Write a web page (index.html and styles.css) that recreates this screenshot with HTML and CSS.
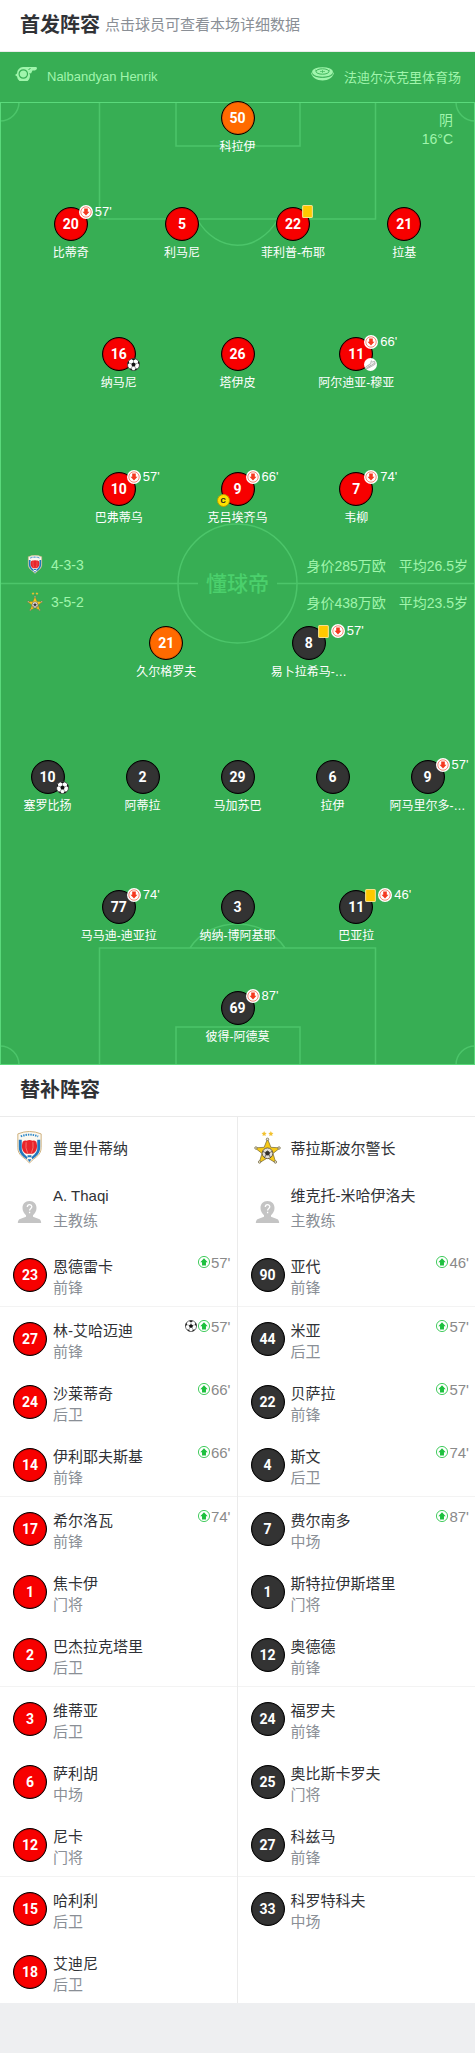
FILE: index.html
```html
<!DOCTYPE html>
<html lang="zh-CN">
<head>
    <meta charset="UTF-8">
    <meta name="viewport" content="width=device-width, initial-scale=1.0">
    <title>首发阵容</title>
    <link rel="stylesheet" href="styles.css">
</head>
<body>
    <!-- shared icons -->
    <svg class="sprite" aria-hidden="true">
        <symbol id="off" viewBox="0 0 14 14">
            <circle cx="7" cy="7" r="7" fill="#fff"/>
            <circle cx="7" cy="7" r="5.2" fill="none" stroke="#f5573c" stroke-width=".7"/>
            <path d="M5.2 3.600h3.600v3.200h1.700L7 10.600 3.500 6.800h1.700z" fill="#f5391f"/>
        </symbol>
        <symbol id="on" viewBox="0 0 14 14">
            <circle cx="7" cy="7" r="6.5" fill="#fff" stroke="#25c345" stroke-width="1"/>
            <path d="M4.700 11h4.600V7.200h2L7 2.600 2.700 7.200h2z" fill="#1dc03e"/>
        </symbol>
        <symbol id="ball" viewBox="0 0 14 14">
            <circle cx="7" cy="7" r="6.500" fill="#fff" stroke="#333" stroke-width=".8"/>
            <path d="M7 4.600l2.400 1.700-.9 2.800h-3l-.9-2.800zM4.600 1.200L7 2.600l2.400-1.400L7 .6zM.7 7.600l1.600-2.200L1.600 3C.8 4.200.4 6 .7 7.600zM13.300 7.600l-1.600-2.200.7-2.400c.8 1.200 1.200 3 .9 4.600zM2.300 11.200l2.500.1.900 2c-1.400-.3-2.600-1-3.400-2.100zM11.700 11.200l-2.500.1-.9 2c1.400-.3 2.600-1 3.400-2.100z" fill="#111"/>
            <path d="M7 2.600v2M9.400 6.300l2.300-.9M8.500 9.100l.7 2.200M5.500 9.100l-.7 2.200M4.600 6.300l-2.300-.9" stroke="#333" stroke-width=".5"/>
        </symbol>
        <symbol id="boot" viewBox="0 0 14 14">
            <circle cx="7" cy="7" r="7" fill="#fff"/>
            <path d="M2 9.500L7.200 6l.6-3 1.500 1.200 2.200-.8.500 3.300-4.200 2.600-4.600 2.200c-1 .2-1.600-1.200-1.200-2zM3 10.500l5-2.600 3.700-2.700M5 8.200l.8 1.200M6.400 7.200l.8 1.200" fill="#eee" stroke="#999" stroke-width=".7"/>
        </symbol>
        <symbol id="card" viewBox="0 0 10 12">
            <rect x=".5" y=".5" width="9" height="11" rx="1" fill="#ffc900" stroke="#f7e08a"/>
        </symbol>
        <symbol id="crest-home" viewBox="0 0 26 34">
            <path d="M1 3Q13-2 25 3v14c0 8-6 10-9 13l-3 3-3-3c-3-3-9-5-9-13z" fill="#fbf8f0" stroke="#cdb07c"/>
            <path d="M4 5.500Q13 2 22 5.500" fill="none" stroke="#2b87c8" stroke-width="2" stroke-dasharray="1.500 1"/>
            <path d="M2 9h3v9c0 4 4 7 6 9l-1 2C6 26 2 23 2 17zM24 9h-3v9c0 4-4 7-6 9l1 2c4-3 8-6 8-12z" fill="#2277bd"/>
            <path d="M6 11q2-2 4-1 3-1.500 6 0 2-1 4 1c2 6 0 11-4 12.500h-6C6 22 4 17 6 11z" fill="#e8242b"/>
            <path d="M9.500 11.500q-1 6 1.500 11M16.500 11.500q1 6-1.500 11" fill="none" stroke="#f5958c" stroke-width=".7"/>
            <path d="M11 25h4v2h-4zM11 29h4l-2 3z" fill="#2277bd"/>
        </symbol>
        <symbol id="crest-away" viewBox="0 0 28 34">
            <path d="M10.500 0l.8 1.700 1.900.2-1.400 1.300.3 1.900-1.600-.9-1.600.9.300-1.900L7.800 1.900l1.900-.2zM17.500 0l.8 1.700 1.900.2-1.400 1.300.3 1.900-1.600-.9-1.600.9.300-1.900-1.400-1.300 1.900-.2z" fill="#f2c12e"/>
            <path d="M14 8l3.500 8.800 9.500.6-7.300 5.800 3 9.800-8.700-5.200L5.300 33l3-9.800L1 17.400l9.500-.6z" fill="#f7c916" stroke="#7d7040" stroke-width=".8"/>
            <circle cx="14" cy="23" r="5.500" fill="#e4e0d8" stroke="#4a443c" stroke-width=".8"/>
            <path d="M14 20.500l2.300 1.700-.9 2.600h-2.800l-.9-2.600zM9 21l2 1M17 22l2-1M12 25l-1 2.500M16 25l1 2.500" fill="#332f2b" stroke="#332f2b" stroke-width=".8"/>
            <g fill="#e9e3cf" stroke="#6f6238" stroke-width=".7"><circle cx="14" cy="8.500" r="1.300"/><circle cx="2" cy="17.500" r="1.300"/><circle cx="26" cy="17.500" r="1.300"/><circle cx="5.800" cy="32" r="1.300"/><circle cx="22.200" cy="32" r="1.300"/></g>
        </symbol>
        <symbol id="person" viewBox="0 0 24 24">
            <path d="M12 1c4.500 0 7 3 7 7 0 3-1.500 5.500-3.500 7.200v1.600l6 2.200c1.500.6 2 2 2.200 4H.3c.2-2 .7-3.400 2.200-4l6-2.200v-1.600C6.500 13.500 5 11 5 8c0-4 2.500-7 7-7z" fill="#c4c4c4"/>
            <path d="M9.800 7c0-3 4.500-3 4.500-.2 0 1.700-2.200 1.700-2.200 3.700M12.100 11.700v1.500" fill="none" stroke="#fff" stroke-width="1.300"/>
        </symbol>
    </svg>

    <header class="title-bar">
        <h1>首发阵容</h1>
        <p>点击球员可查看本场详细数据</p>
    </header>

    <main class="field">
        <div class="match-info">
            <svg width="22" height="14" viewBox="0 0 22 14" aria-hidden="true">
                <path d="M8 0h13.500l.5 2-2 1.500h-2.500L16 6.500 14.300 6A6.500 6.500 0 1 1 2 9.500L0 8l2-1.500A6.500 6.500 0 0 1 8 0z" fill="#a0f5ac"/>
                <circle cx="8.300" cy="7" r="4.200" fill="none" stroke="#37ae54" stroke-width="1.200"/>
                <path d="M13.500 2.500l2-1" stroke="#37ae54"/>
            </svg>
            <span class="referee">Nalbandyan Henrik</span>
            <svg width="23" height="14" viewBox="0 0 23 14" aria-hidden="true">
                <ellipse cx="11.500" cy="5" rx="10.500" ry="4.800" fill="#a0f5ac"/>
                <ellipse cx="11.500" cy="4.500" rx="6.500" ry="2.700" fill="none" stroke="#37ae54" stroke-width=".9"/>
                <path d="M9 4.500h5M11.500 3v3M4 3l2 1M19 3l-2 1" stroke="#37ae54" stroke-width=".6"/>
                <path d="M0 5c3 5 7 5.500 11.500 5.500S20 10 23 5c0 5-6 8.500-11.500 8.500S0 10 0 5z" fill="#a0f5ac"/>
                <path d="M1 7.500c5 4 16 4 21 0" fill="none" stroke="#37ae54" stroke-width=".7"/>
            </svg>
            <span>法迪尔沃克里体育场</span>
        </div>

        <div class="pitch">
            <svg class="lines" viewBox="0 0 475 963" preserveAspectRatio="none" aria-hidden="true">
                <g fill="none" stroke="#4cc56a" stroke-width="1.500">
                    <path d="M99.500 0v117h276V0M176 0v44h124V0M197 117c20 35 61 35 81 0"/>
                    <path d="M99.500 963V846h276v117M176 963v-38h124v38M190 846c20-32 74-32 95 0"/>
                    <path d="M19 0A19 19 0 0 1 0 19M456 0a19 19 0 0 0 19 19M0 944a19 19 0 0 1 19 19M475 944a19 19 0 0 0-19 19"/>
                    <path d="M0 481.500h198M277 481.500h198"/>
                    <circle cx="237.500" cy="481.500" r="59.500"/>
                </g>
                <rect x=".5" y=".5" width="474" height="962" fill="none" stroke="#5ad97b"/>
            </svg>
            <div class="logo">懂球帝</div>
            <div class="weather">阴<br>16°C</div>

            <section class="team home">
                <div class="line one">
                    <a class="player" href="#"><span class="num keeper">50</span><span class="name">科拉伊</span></a>
                </div>
                <div class="line four">
                    <a class="player" href="#"><span class="num">20</span><span class="name">比蒂奇</span><span class="events"><svg class="ico"><use href="#off"/></svg>57'</span></a>
                    <a class="player" href="#"><span class="num">5</span><span class="name">利马尼</span></a>
                    <a class="player" href="#"><span class="num">22</span><span class="name">菲利普-布耶</span><span class="events"><svg class="card"><use href="#card"/></svg></span></a>
                    <a class="player" href="#"><span class="num">21</span><span class="name">拉基</span></a>
                </div>
                <div class="line three">
                    <a class="player" href="#"><span class="num">16</span><span class="name">纳马尼</span><svg class="ico goal"><use href="#ball"/></svg></a>
                    <a class="player" href="#"><span class="num">26</span><span class="name">塔伊皮</span></a>
                    <a class="player" href="#"><span class="num">11</span><span class="name">阿尔迪亚-穆亚</span><span class="events"><svg class="ico"><use href="#off"/></svg>66'</span><svg class="ico goal"><use href="#boot"/></svg></a>
                </div>
                <div class="line three">
                    <a class="player" href="#"><span class="num">10</span><span class="name">巴弗蒂乌</span><span class="events"><svg class="ico"><use href="#off"/></svg>57'</span></a>
                    <a class="player" href="#"><span class="num">9</span><span class="name">克吕埃齐乌</span><span class="events"><svg class="ico"><use href="#off"/></svg>66'</span><span class="captain">C</span></a>
                    <a class="player" href="#"><span class="num">7</span><span class="name">韦柳</span><span class="events"><svg class="ico"><use href="#off"/></svg>74'</span></a>
                </div>
                <div class="formation">
                    <svg class="mini-crest"><use href="#crest-home"/></svg>
                    <span class="shape">4-3-3</span>
                    <span>身价285万欧</span>
                    <span>平均26.5岁</span>
                </div>
            </section>

            <section class="team away">
                <div class="formation">
                    <svg class="mini-crest"><use href="#crest-away"/></svg>
                    <span class="shape">3-5-2</span>
                    <span>身价438万欧</span>
                    <span>平均23.5岁</span>
                </div>
                <div class="line two">
                    <a class="player" href="#"><span class="num keeper">21</span><span class="name">久尔格罗夫</span></a>
                    <a class="player" href="#"><span class="num">8</span><span class="name">易卜拉希马-…</span><span class="events"><svg class="card"><use href="#card"/></svg><svg class="ico"><use href="#off"/></svg>57'</span></a>
                </div>
                <div class="line five">
                    <a class="player" href="#"><span class="num">10</span><span class="name">塞罗比扬</span><svg class="ico goal"><use href="#ball"/></svg></a>
                    <a class="player" href="#"><span class="num">2</span><span class="name">阿蒂拉</span></a>
                    <a class="player" href="#"><span class="num">29</span><span class="name">马加苏巴</span></a>
                    <a class="player" href="#"><span class="num">6</span><span class="name">拉伊</span></a>
                    <a class="player" href="#"><span class="num">9</span><span class="name">阿马里尔多-…</span><span class="events"><svg class="ico"><use href="#off"/></svg>57'</span></a>
                </div>
                <div class="line three">
                    <a class="player" href="#"><span class="num">77</span><span class="name">马马迪-迪亚拉</span><span class="events"><svg class="ico"><use href="#off"/></svg>74'</span></a>
                    <a class="player" href="#"><span class="num">3</span><span class="name">纳纳-博阿基耶</span></a>
                    <a class="player" href="#"><span class="num">11</span><span class="name">巴亚拉</span><span class="events"><svg class="card"><use href="#card"/></svg><svg class="ico"><use href="#off"/></svg>46'</span></a>
                </div>
                <div class="line one">
                    <a class="player" href="#"><span class="num">69</span><span class="name">彼得-阿德莫</span><span class="events"><svg class="ico"><use href="#off"/></svg>87'</span></a>
                </div>
            </section>
        </div>
    </main>

    <header class="title-bar">
        <h2>替补阵容</h2>
    </header>

    <div class="bench">
        <section class="column home">
            <div class="club"><svg class="crest"><use href="#crest-home"/></svg><h3>普里什蒂纳</h3></div>
            <div class="coach"><svg class="avatar"><use href="#person"/></svg><div><p>A. Thaqi</p><p class="role">主教练</p></div></div>
            <ul>
                <li><span class="num">23</span><div><p>恩德雷卡</p><p class="role">前锋</p></div><span class="sub"><svg><use href="#on"/></svg>57'</span></li>
                <li><span class="num">27</span><div><p>林-艾哈迈迪</p><p class="role">前锋</p></div><span class="sub"><svg><use href="#ball"/></svg><svg><use href="#on"/></svg>57'</span></li>
                <li><span class="num">24</span><div><p>沙莱蒂奇</p><p class="role">后卫</p></div><span class="sub"><svg><use href="#on"/></svg>66'</span></li>
                <li><span class="num">14</span><div><p>伊利耶夫斯基</p><p class="role">前锋</p></div><span class="sub"><svg><use href="#on"/></svg>66'</span></li>
                <li><span class="num">17</span><div><p>希尔洛瓦</p><p class="role">前锋</p></div><span class="sub"><svg><use href="#on"/></svg>74'</span></li>
                <li><span class="num">1</span><div><p>焦卡伊</p><p class="role">门将</p></div></li>
                <li><span class="num">2</span><div><p>巴杰拉克塔里</p><p class="role">后卫</p></div></li>
                <li><span class="num">3</span><div><p>维蒂亚</p><p class="role">后卫</p></div></li>
                <li><span class="num">6</span><div><p>萨利胡</p><p class="role">中场</p></div></li>
                <li><span class="num">12</span><div><p>尼卡</p><p class="role">门将</p></div></li>
                <li><span class="num">15</span><div><p>哈利利</p><p class="role">后卫</p></div></li>
                <li><span class="num">18</span><div><p>艾迪尼</p><p class="role">后卫</p></div></li>
            </ul>
        </section>
        <section class="column away">
            <div class="club"><svg class="crest"><use href="#crest-away"/></svg><h3>蒂拉斯波尔警长</h3></div>
            <div class="coach"><svg class="avatar"><use href="#person"/></svg><div><p>维克托-米哈伊洛夫</p><p class="role">主教练</p></div></div>
            <ul>
                <li><span class="num">90</span><div><p>亚代</p><p class="role">前锋</p></div><span class="sub"><svg><use href="#on"/></svg>46'</span></li>
                <li><span class="num">44</span><div><p>米亚</p><p class="role">后卫</p></div><span class="sub"><svg><use href="#on"/></svg>57'</span></li>
                <li><span class="num">22</span><div><p>贝萨拉</p><p class="role">前锋</p></div><span class="sub"><svg><use href="#on"/></svg>57'</span></li>
                <li><span class="num">4</span><div><p>斯文</p><p class="role">后卫</p></div><span class="sub"><svg><use href="#on"/></svg>74'</span></li>
                <li><span class="num">7</span><div><p>费尔南多</p><p class="role">中场</p></div><span class="sub"><svg><use href="#on"/></svg>87'</span></li>
                <li><span class="num">1</span><div><p>斯特拉伊斯塔里</p><p class="role">门将</p></div></li>
                <li><span class="num">12</span><div><p>奥德德</p><p class="role">前锋</p></div></li>
                <li><span class="num">24</span><div><p>福罗夫</p><p class="role">前锋</p></div></li>
                <li><span class="num">25</span><div><p>奥比斯卡罗夫</p><p class="role">门将</p></div></li>
                <li><span class="num">27</span><div><p>科兹马</p><p class="role">前锋</p></div></li>
                <li><span class="num">33</span><div><p>科罗特科夫</p><p class="role">中场</p></div></li>
            </ul>
        </section>
    </div>
</body>
</html>
```

FILE: styles.css
```css
* {
    box-sizing: border-box;
    margin: 0;
    padding: 0;
}
body {
    font-family: "Liberation Sans", "Noto Sans CJK SC", sans-serif;
    font-size: 15px;
    color: #303236;
    background-color: #eeeff1;
    padding-bottom: 50px;
}
.sprite {
    position: absolute;
    width: 0;
    height: 0;
}
svg {
    display: block;
    flex: none;
}
a {
    color: inherit;
    text-decoration: none;
}
ul {
    list-style: none;
}
.title-bar {
    display: flex;
    align-items: center;
    gap: 5px;
    height: 52px;
    padding: 0 20px 4px;
    background-color: #fff;
    border-bottom: 1px solid #ebebeb;
}
.title-bar h1,
.title-bar h2 {
    font-size: 20px;
}
.title-bar p {
    color: #8a8f96;
}

/* field */
.field {
    background-color: #37ae54;
    color: #a0f5ac;
}
.match-info {
    display: flex;
    align-items: center;
    gap: 10px;
    height: 50px;
    padding: 0 14px 2px 15px;
    font-size: 13px;
}
.match-info svg {
    margin-bottom: 4px;
}
.referee {
    flex: 1;
}
.pitch {
    position: relative;
}
.lines {
    position: absolute;
    width: 100%;
    height: 100%;
}
.logo {
    position: absolute;
    top: 50%;
    left: 50%;
    transform: translate(-50%, -50%);
    font-size: 21px;
    font-weight: 500;
    line-height: 26px;
    color: #4bd06c;
}
.weather {
    position: absolute;
    top: 9px;
    right: 22px;
    font-size: 14px;
    line-height: 19px;
    text-align: right;
}
.team {
    position: relative;
    display: flex;
    flex-direction: column;
}
.line {
    display: flex;
    justify-content: center;
    margin-bottom: 74px;
}
/* keeper sits on the goal line */
.home .one {
    margin-top: -1px;
    margin-bottom: 50px;
}
.home .formation {
    margin-bottom: 8px;
}
.away .formation {
    margin: 8px 0 14px;
}
.home .line:nth-child(3) {
    margin-bottom: 79px;
}
.home .line:nth-child(4) {
    margin-bottom: 26px;
}
.away .two {
    margin-bottom: 78px;
}
.away .three {
    margin-bottom: 45px;
}
.away .one {
    margin-bottom: 18px;
}
.player {
    position: relative;
    display: flex;
    flex-direction: column;
    align-items: center;
    gap: 3px;
    width: 25%;
    padding-bottom: 1px;
    color: #fff;
}
.two .player {
    width: 30%;
}
.four .player {
    width: 23.4%;
}
.five .player {
    width: 20%;
}
.num {
    display: flex;
    flex: none;
    align-items: center;
    justify-content: center;
    width: 34px;
    height: 34px;
    border: 1px solid #000;
    border-radius: 50%;
    background-color: #f70000;
    box-shadow: inset 0 0 1px #000;
    color: #fff;
    font: bold 14px Roboto, sans-serif;
}
.away .num {
    background-color: #333;
}
.num.keeper,
.away .num.keeper {
    background-color: #ff6a00;
}
.name {
    font-size: 12px;
    line-height: 18px;
    white-space: nowrap;
}
.events {
    position: absolute;
    top: -2px;
    left: 50%;
    display: flex;
    align-items: center;
    gap: 2px;
    margin-left: 8px;
    font-size: 13px;
    line-height: 14px;
}
.ico {
    width: 14px;
    height: 14px;
}
.card {
    width: 11px;
    height: 13px;
    margin-left: 1px;
}
.goal {
    position: absolute;
    top: 21px;
    left: 50%;
    width: 13px;
    height: 13px;
    margin-left: 8px;
}
.captain {
    position: absolute;
    top: 22px;
    left: 50%;
    width: 13px;
    height: 13px;
    margin-left: -21px;
    border: 1px solid #b89d00;
    border-radius: 50%;
    background-color: #ffe100;
    color: #222;
    font: bold 8px/11px Roboto, sans-serif;
    text-align: center;
}
.formation {
    display: flex;
    align-items: center;
    gap: 13px;
    height: 21px;
    padding: 0 7px 0 27px;
    font-size: 14px;
}
.mini-crest {
    width: 16px;
    height: 19px;
    margin-right: -5px;
}
.shape {
    flex: 1;
}

/* bench */
.bench {
    display: flex;
    background-color: #fff;
}
.column {
    width: 50%;
}
.column.home {
    border-right: 1px solid #ebebeb;
}
.club {
    display: flex;
    align-items: center;
    gap: 10px;
    height: 61px;
    padding-left: 16px;
}
.club h3 {
    font-size: 15px;
    font-weight: normal;
}
.crest {
    width: 27px;
    height: 33px;
}
.coach {
    display: flex;
    align-items: center;
    gap: 11px;
    height: 65px;
    padding: 0 0 5px 17px;
}
.coach p {
    line-height: 25px;
}
.avatar {
    width: 25px;
    height: 24px;
    margin-top: 8px;
}
.column .role {
    color: #8a8f96;
}
.column li {
    display: flex;
    gap: 6px;
    height: 63px;
    padding: 13px 6px 0 13px;
}
.column li:nth-child(3n+1) {
    height: 64px;
    border-bottom: 1px solid #f3f3f3;
}
.column li .num {
    margin-top: 2px;
}
.column li p {
    line-height: 21px;
}
.sub {
    display: flex;
    align-items: center;
    gap: 1px;
    height: 12px;
    margin-left: auto;
    color: #8a8a8a;
}
.sub svg {
    width: 12px;
    height: 12px;
}
```
